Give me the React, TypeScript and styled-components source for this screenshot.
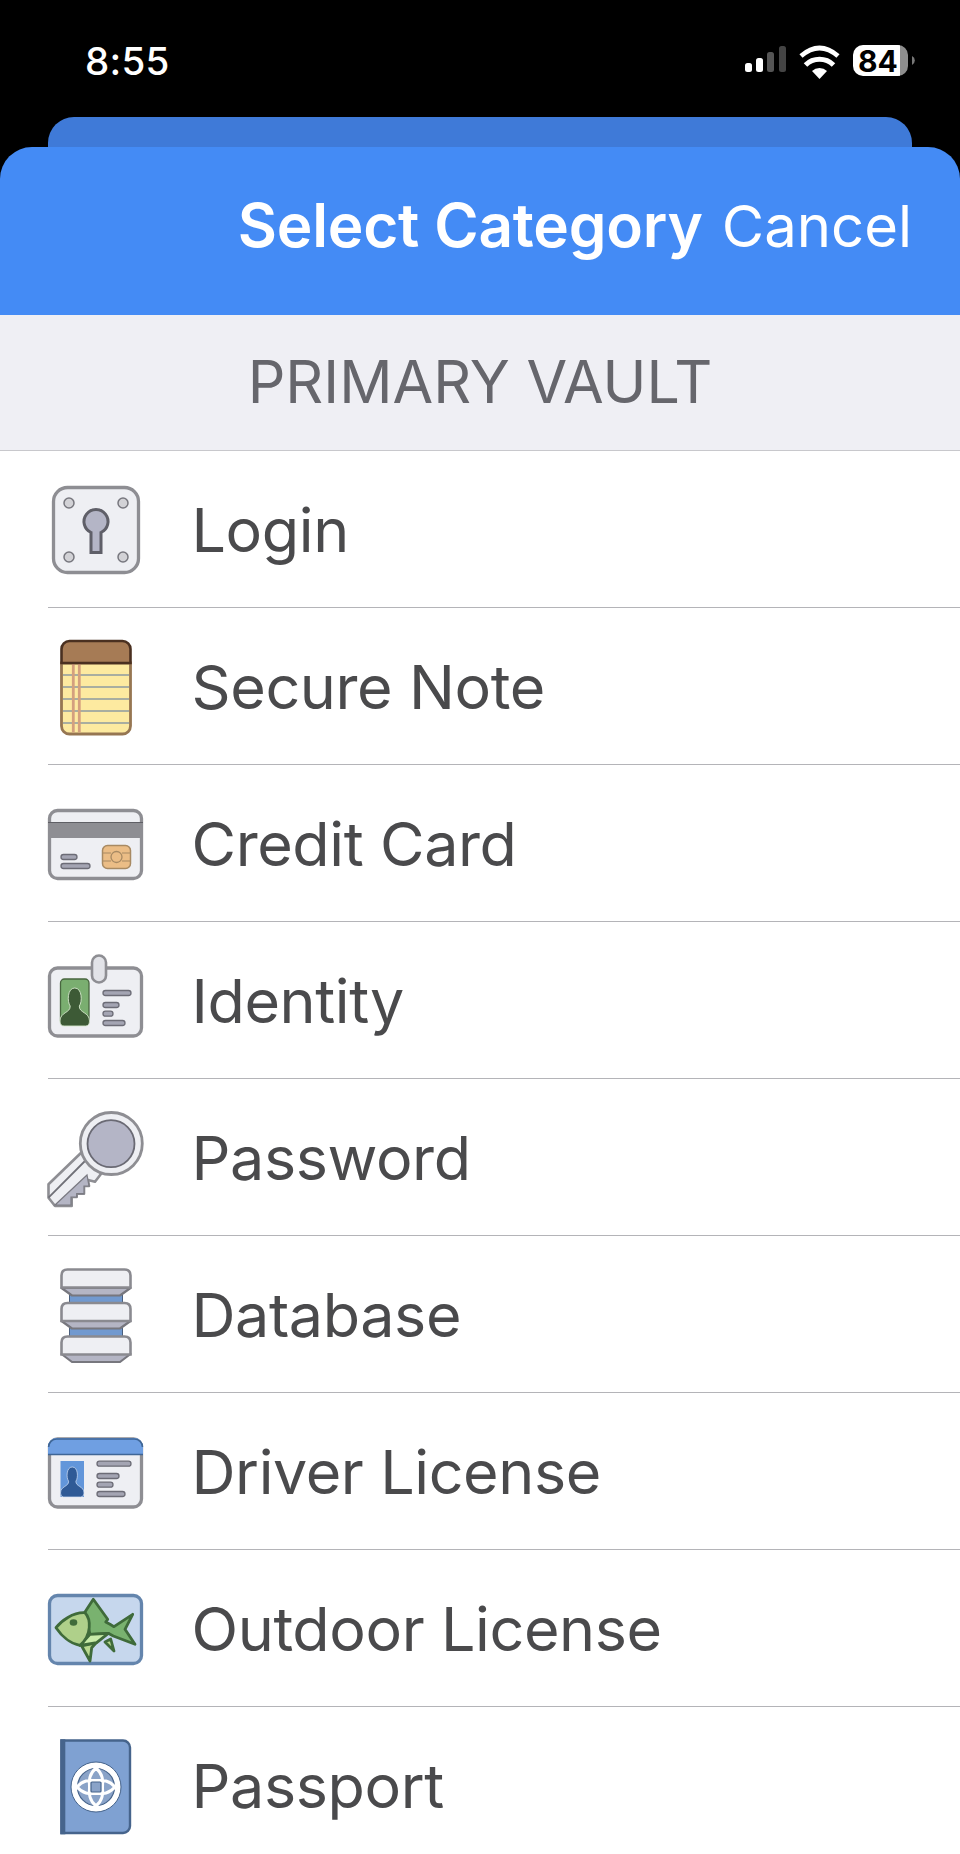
import React from "react";
import styled, { createGlobalStyle } from "styled-components";

const Global = createGlobalStyle`
  html, body { margin: 0; padding: 0; background: #fff; }
  body { width: 960px; height: 1854px; overflow: hidden; font-family: Inter, "Liberation Sans", sans-serif; }
`;

const Page = styled.div`
  width: 960px; height: 1854px; overflow: hidden; background: #fff; display: flex; flex-direction: column;
  & > * { flex: none; }
`;
const Top = styled.div`background: #000; display: flex; flex-direction: column;`;
const StatusBar = styled.div`
  height: 117px; box-sizing: border-box; padding: 33px 0 0 85px; display: flex; align-items: flex-start; justify-content: space-between;
`;
const Time = styled.span`
  color: #fff; font-size: 38.5px; line-height: 40px; font-weight: 500; letter-spacing: 0.3px; margin-top: 8px;
`;
const StatusIcons = styled.svg`display: block;`;
const BackSheet = styled.div`
  height: 30px; margin: 0 48px; background: #3f7ad8; border-radius: 26px 26px 0 0;
`;
const Header = styled.header`
  height: 168px; background: #448bf5; border-radius: 32px 32px 0 0; box-sizing: border-box;
  padding: 0 48px 10px 0; display: flex; align-items: center; justify-content: flex-end; gap: 19px; color: #fff;
`;
const Title = styled.h1`margin: 0; font-size: 60.3px; font-weight: 600; line-height: 70px; letter-spacing: -0.2px;`;
const Cancel = styled.span`font-size: 58px; font-weight: 400; line-height: 70px;`;
const VaultBand = styled.div`
  height: 136px; box-sizing: border-box; background: #efeff4; border-bottom: 1px solid #c8c8cc;
  display: flex; align-items: center; justify-content: center; color: #66666c; font-size: 59px; font-weight: 400; padding-bottom: 2px;
`;
const List = styled.ul`margin: 0; padding: 0 0 0 48px; list-style: none;`;
const Row = styled.li`
  height: 157px; box-sizing: border-box; display: flex; align-items: center; border-bottom: 1px solid #b4b4b8; padding-top: 1px;
  &:last-child { border-bottom: none; }
`;
const IconSlot = styled.svg`width: 100px; height: 100px; margin-left: -2px; flex: none; display: block;`;
const Label = styled.span`margin-left: 45.5px; font-size: 61px; line-height: 70px; color: #4a4a4c; font-weight: 400; letter-spacing: -0.4px;`;

const Pill = ({ x, y, w }: { x: number; y: number; w: number }) => (
  <rect x={x} y={y - 2.5} width={w} height={5} rx={2.5} fill="#a4a5b3" stroke="#6c6c76" strokeWidth={1.3} />
);

const Login = () => (
  <IconSlot viewBox="0 0 100 100">
    <rect x={7.5} y={7.5} width={85} height={85} rx={14} fill="#eeeff3" stroke="#8e8e93" strokeWidth={3.3} />
    {[[23, 23], [77, 23], [23, 77], [77, 77]].map(([cx, cy]) => (
      <circle key={`${cx}${cy}`} cx={cx} cy={cy} r={5} fill="#d2d2d6" stroke="#77777e" strokeWidth={1.5} />
    ))}
    <path d="M45 52.5 A12 12 0 1 1 55 52.5 V72.5 H45 Z" fill="#b4b5c6" stroke="#5f5f68" strokeWidth={3} />
  </IconSlot>
);
const Note = () => (
  <IconSlot viewBox="0 0 100 100">
    <path d="M15.5 26 H84.5 V89 a8 8 0 0 1 -8 8 H23.5 a8 8 0 0 1 -8 -8 Z" fill="#fdeaa0" stroke="#967652" strokeWidth={2.8} />
    {[38, 50, 62, 74, 86].map((y) => (
      <line key={y} x1={17} x2={83} y1={y} y2={y} stroke="#8c9aa0" strokeWidth={1.3} />
    ))}
    <path d="M27.3 27 V95.5 M33.3 27 V95.5" stroke="#d4a07e" strokeWidth={2.8} />
    <path d="M15.5 26 V12 a8 8 0 0 1 8 -8 H76.5 a8 8 0 0 1 8 8 V26 Z" fill="#a67b55" stroke="#4a3020" strokeWidth={2.6} />
  </IconSlot>
);
const Credit = () => (
  <IconSlot viewBox="0 0 100 100">
    <rect x={3.5} y={16.5} width={92} height={68} rx={8} fill="#eeeff3" stroke="#8e8e93" strokeWidth={3.3} />
    <rect x={2} y={28} width={95} height={16} fill="#8e8e93" />
    <line x1={2} x2={97} y1={28.5} y2={28.5} stroke="#5f5f65" strokeWidth={1.2} />
    <rect x={56.5} y={51.5} width={28} height={23} rx={5} fill="#ebbd86" stroke="#a88a63" strokeWidth={1.5} />
    <path d="M56.5 59 H65 M56.5 67 H65 M76 59 H84.5 M76 67 H84.5" stroke="#a88a63" strokeWidth={1.2} />
    <circle cx={70.5} cy={63} r={5.5} fill="none" stroke="#a88a63" strokeWidth={1.3} />
    <Pill x={15} y={63} w={16} />
    <Pill x={15} y={72} w={29} />
  </IconSlot>
);
const personPath = (x: number, w: number, top: number, b: number) => {
  const c = x + w / 2;
  const s = (b - top) / 38;
  const u = w / 29;
  const r = x + w;
  return `M${x + 4 * u} ${b} Q${x} ${b} ${x} ${b - 5 * s} C${x} ${b - 14 * s} ${c - 4 * u} ${b - 13 * s} ${c - 4.5 * u} ${b - 20 * s} C${c - 7.5 * u} ${b - 24 * s} ${c - 7.5 * u} ${top} ${c} ${top} C${c + 7.5 * u} ${top} ${c + 7.5 * u} ${b - 24 * s} ${c + 4.5 * u} ${b - 20 * s} C${c + 4 * u} ${b - 13 * s} ${r} ${b - 14 * s} ${r} ${b - 5 * s} Q${r} ${b} ${r - 4 * u} ${b} Z`;
};
const Identity = () => (
  <IconSlot viewBox="0 0 100 100">
    <rect x={3.5} y={17} width={92} height={68} rx={8} fill="#eeeff3" stroke="#8e8e93" strokeWidth={3.3} />
    <rect x={14.5} y={28} width={28.5} height={46} rx={4} fill="#7aae70" stroke="#48663f" strokeWidth={1.3} />
    <path d={personPath(14, 29.5, 37, 75)} fill="#3d5a36" stroke="#d5e8cc" strokeWidth={0.9} />
    <rect x={46} y={4.5} width={14} height={27} rx={7} fill="#e2e3e8" stroke="#8e8e93" strokeWidth={2.6} />
    <Pill x={57} y={42} w={28} />
    <Pill x={57} y={54} w={16} />
    <Pill x={57} y={62.7} w={10} />
    <Pill x={57} y={72} w={22} />
  </IconSlot>
);
const Key = () => (
  <IconSlot viewBox="0 0 100 100">
    <path d="M38 42 L2.5 76.3 V89.7 L9 98 H25.7 V89 H30.7 V85.7 H38 V78 H43 L42 72 L49 73.7 L58 62 Z" fill="#eeeff3" stroke="#8e8e93" strokeWidth={2.6} strokeLinejoin="round" />
    <path d="M9 97 H25 V89 H30.7 V85.7 H38 V78 H43 L41 67 Z" fill="#b4b5c4" stroke="#7a7a82" strokeWidth={1.2} />
    <path d="M2.5 89.7 L39 53" stroke="#6f6f77" strokeWidth={1.8} />
    <circle cx={65.3} cy={35.5} r={31} fill="#eeeff3" stroke="#8e8e93" strokeWidth={2.8} />
    <circle cx={65} cy={35.7} r={23.5} fill="#b4b5c6" stroke="#6a6a74" strokeWidth={1.8} />
  </IconSlot>
);
const Database = () => (
  <IconSlot viewBox="0 0 100 100">
    <rect x={23.5} y={29} width={53} height={10} fill="#7199cf" stroke="#4a5f7d" strokeWidth={1} />
    <rect x={23.5} y={62} width={53} height={10} fill="#7199cf" stroke="#4a5f7d" strokeWidth={1} />
    <path d="M15.5 23 L26 30.5 H74 L84.5 23 Z M15.5 56 L26 63.5 H74 L84.5 56 Z M15.5 89 L26 97 H74 L84.5 89 Z" fill="#b4b5c4" stroke="#77777e" strokeWidth={2.2} strokeLinejoin="round" />
    {[4.5, 38, 71.5].map((y) => (
      <path key={y} d={`M15.5 ${y + 18} V${y + 6} Q15.5 ${y} 21.5 ${y} H78.5 Q84.5 ${y} 84.5 ${y + 6} V${y + 18} Z`} fill="#eeeff3" stroke="#8a8a90" strokeWidth={2.6} />
    ))}
  </IconSlot>
);
const License = () => (
  <IconSlot viewBox="0 0 100 100">
    <rect x={3.5} y={17} width={92} height={68} rx={8} fill="#eeeff3" stroke="#8e8e93" strokeWidth={3.3} />
    <path d="M2 32.5 V24.5 a8.5 8.5 0 0 1 8.5 -8.5 H88.5 a8.5 8.5 0 0 1 8.5 8.5 V32.5 Z" fill="#6f9fe2" />
    <path d="M2 32.5 H97 M2.6 25 a8 8 0 0 1 8 -8 H88.5 a8 8 0 0 1 8 8" fill="none" stroke="#3f6696" strokeWidth={1.6} />
    <rect x={14.5} y={39} width={23.5} height={36} fill="#6296da" />
    <path d={personPath(14.5, 23.5, 45, 75)} fill="#2f5a96" stroke="#d5e3f7" strokeWidth={0.7} />
    <Pill x={51} y={41.7} w={34} />
    <Pill x={51} y={54} w={22} />
    <Pill x={51} y={62.7} w={16} />
    <Pill x={51} y={72} w={28} />
  </IconSlot>
);
const Fish = () => (
  <IconSlot viewBox="0 0 100 100">
    <rect x={3.5} y={16.5} width={92} height={68} rx={8} fill="#c6d7ed" stroke="#6485ad" strokeWidth={3.3} />
    <path d="M35.7 67 L44 82 L45.7 68.7 L50 64 Z M59 63 L68 72 L64.7 60 Z" fill="#b8d98f" stroke="#3f6b3a" strokeWidth={2.8} strokeLinejoin="round" />
    <path d="M39 33 L47.3 20.3 L61.7 40.3 L59.7 43 L64 45.3 L68 47.7 L86.7 35.3 L79 50.3 L89 65.3 L67.3 57 L62.3 54.3 L44 55.3 Z" fill="#79b26f" stroke="#3f6b3a" strokeWidth={2.8} strokeLinejoin="round" />
    <path d="M44 55.3 L62.3 54.3 L50.7 63.7 L34 66.3 Z" fill="#c8eca9" stroke="#3f6b3a" strokeWidth={2.8} strokeLinejoin="round" />
    <path d="M10 48.7 C15 42 27 33 39 33.7 C45 40 46 56 34 66.3 C24 65 15 56 10 48.7 Z" fill="#afd08a" stroke="#3f6b3a" strokeWidth={2.8} strokeLinejoin="round" />
    <ellipse cx={27.5} cy={43.5} rx={3.8} ry={3.2} fill="#3f6b3a" />
  </IconSlot>
);
const Passport = () => (
  <IconSlot viewBox="0 0 100 100">
    <path d="M15.5 4.5 H77 a7 7 0 0 1 7 7 V90 a7 7 0 0 1 -7 7 H15.5 Z" fill="#7fa1d2" stroke="#46648c" strokeWidth={2.4} />
    <rect x={14.3} y={3.3} width={5} height={95} fill="#46648c" />
    <circle cx={50} cy={51} r={25} fill="#fff" stroke="#46648c" strokeWidth={1} />
    <circle cx={50} cy={51} r={18.5} fill="#8aa3c8" stroke="#46648c" strokeWidth={1.2} />
    <path d="M50 32 C42 39 43.5 46 43.5 51 C43.5 56 42 63 50 70 C58 63 56.5 56 56.5 51 C56.5 46 58 39 50 32 Z M31 51 C38 43 45 44.5 50 44.5 C55 44.5 62 43 69 51 C62 59 55 57.5 50 57.5 C45 57.5 38 59 31 51 Z" fill="none" stroke="#fff" strokeWidth={3} />
    <rect x={45} y={46} width={10} height={10} rx={1} fill="#8aa3c8" stroke="#46648c" strokeWidth={1.2} />
  </IconSlot>
);

const items: [string, React.FC][] = [
  ["Login", Login], ["Secure Note", Note], ["Credit Card", Credit], ["Identity", Identity], ["Password", Key],
  ["Database", Database], ["Driver License", License], ["Outdoor License", Fish], ["Passport", Passport],
];

const BatteryText = styled.text`font-family: Inter, "Liberation Sans", sans-serif; font-size: 30px; font-weight: 700; fill: #000;`;

export default function App() {
  return (
    <Page>
      <Global />
      <Top>
        <StatusBar>
          <Time>8:55</Time>
          <StatusIcons width={215} height={60} viewBox="0 -12 215 60">
            <rect x={0} y={18} width={7} height={9} rx={2.5} fill="#fff" />
            <rect x={11} y={13} width={7} height={14} rx={2.5} fill="#fff" />
            <rect x={22} y={7} width={7} height={20} rx={2.5} fill="#555" />
            <rect x={34} y={1} width={7} height={26} rx={2.5} fill="#444" />
            <path d="M74.5 34 L67 26 A11 11 0 0 1 82 26 Z" fill="#fff" />
            <path d="M60.5 20 A20 20 0 0 1 88.5 20" fill="none" stroke="#fff" strokeWidth={5} />
            <path d="M56 11 Q74.5 -5 93 11" fill="none" stroke="#fff" strokeWidth={4.8} />
            <path d="M108 10 a10 10 0 0 1 10 -10 H155 V31 H118 a10 10 0 0 1 -10 -10 Z" fill="#fff" />
            <path d="M155 0 H153 a10 10 0 0 1 10 10 V21 a10 10 0 0 1 -10 10 H155 Z" fill="#8e8e8e" />
            <path d="M167 11 a5 5 0 0 1 0 9 Z" fill="#777" />
            <BatteryText x={133} y={26.5} textAnchor="middle">84</BatteryText>
          </StatusIcons>
        </StatusBar>
        <BackSheet />
        <Header>
          <Title>Select Category</Title>
          <Cancel>Cancel</Cancel>
        </Header>
      </Top>
      <VaultBand>PRIMARY VAULT</VaultBand>
      <List>
        {items.map(([name, Icon]) => (
          <Row key={name}>
            <Icon />
            <Label>{name}</Label>
          </Row>
        ))}
      </List>
    </Page>
  );
}
